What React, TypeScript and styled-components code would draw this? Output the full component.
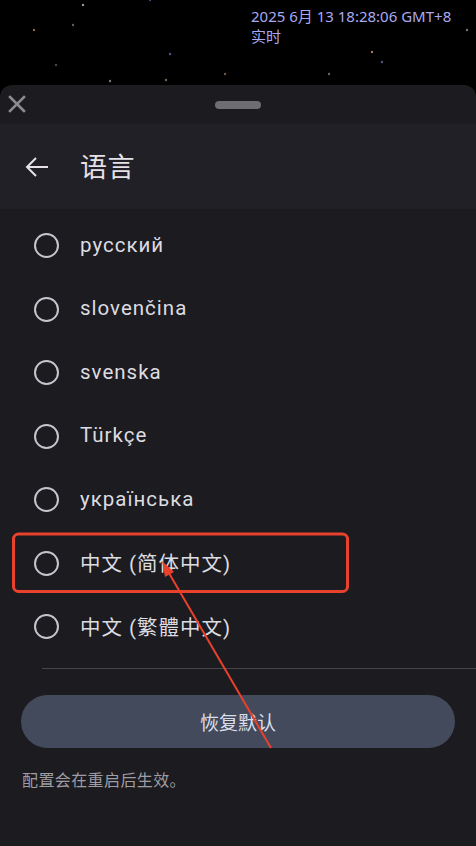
import React from "react";
import styled, {createGlobalStyle} from "styled-components";

const GlobalStyle = createGlobalStyle`
  html, body {
    margin: 0;
    padding: 0;
    background: #000;
  }

  body {
    font-family: Roboto, "Noto Sans CJK SC", sans-serif;
  }
`;

const Page = styled.div`
  width: 476px;
  height: 846px;
  position: relative;
  overflow: hidden;
  display: flex;
  flex-direction: column;
  background: #000;
`;

const Sky = styled.div`
  position: relative;
  height: 85px;
  flex: none;
  padding: 6px 0 0 251px;
  box-sizing: border-box;
  color: #a9a9f2;
  font-family: "Noto Sans", "Noto Sans CJK SC", sans-serif;
  font-size: 15px;
  line-height: 20px;
`;

const Stars = styled.svg`
  position: absolute;
  inset: 0;
  pointer-events: none;
`;

const SkyText = styled.div`
  position: relative;
`;

const Sheet = styled.div`
  flex: 1;
  background: #1c1b20;
  border-radius: 12px 12px 0 0;
  display: flex;
  flex-direction: column;
`;

const Grabber = styled.div`
  height: 39px;
  position: relative;
  display: flex;
  align-items: center;
  justify-content: center;
`;

const CloseButton = styled.div`
  position: absolute;
  left: 8px;
  top: 10px;
  width: 18px;
  height: 18px;
  display: flex;
`;

const Handle = styled.div`
  width: 46px;
  height: 8px;
  border-radius: 4px;
  background: #6e6e70;
`;

const TitleBar = styled.div`
  height: 85px;
  background: #212026;
  display: flex;
  align-items: center;
  padding-left: 25px;
  gap: 31px;
  color: #e6e1e6;
`;

const Title = styled.div`
  font-family: "Noto Sans CJK SC", sans-serif;
  font-size: 27px;
  line-height: 1;
  margin-top: -2px;
  letter-spacing: 0.5px;
`;

const List = styled.div`
  display: flex;
  flex-direction: column;
  padding-top: 5px;
`;

const Row = styled.div`
  height: 63.5px;
  display: flex;
  align-items: center;
  padding-left: 34px;
  gap: 21px;
`;

const Radio = styled.span`
  width: 21px;
  height: 21px;
  border: 2.5px solid #c6c5cb;
  border-radius: 50%;
  flex: none;
`;

const Label = styled.span`
  font-size: 20.5px;
  color: #dddce1;
  letter-spacing: 1px;
  margin-top: -2px;
`;

const Divider = styled.div`
  height: 1px;
  background: #47464c;
  margin: 9px 0 0 42px;
`;

const ResetButton = styled.div`
  margin: 26px 21px 0;
  height: 53px;
  border-radius: 27px;
  background: #434a5c;
  display: flex;
  align-items: center;
  justify-content: center;
  font-family: "Noto Sans CJK SC", sans-serif;
  font-size: 19px;
  color: #dadeea;
`;

const Note = styled.div`
  margin: 19px 0 0 22px;
  font-family: "Noto Sans CJK SC", sans-serif;
  font-size: 16px;
  letter-spacing: 0.4px;
  color: #9e9da3;
`;

const Annotation = styled.svg`
  position: absolute;
  inset: 0;
  pointer-events: none;
`;

const languages = [
    "русский",
    "slovenčina",
    "svenska",
    "Türkçe",
    "українська",
    "中文 (简体中文)",
    "中文 (繁體中文)",
];

const stars = [
    [83, 5, "#999"], [34, 30, "#8a6a50"], [73, 25, "#6a5a50"], [170, 54, "#4a5a8a"],
    [56, 65, "#3a4a5a"], [110, 81, "#777"], [225, 74, "#6a5545"], [166, 80, "#806040"],
    [329, 74, "#666"], [372, 52, "#a07a60"], [382, 62, "#4a5a8a"], [467, 30, "#807060"],
    [150, 0, "#3a4a7a"],
] as const;

const App = () => {
    return (
        <Page>
            <GlobalStyle/>
            <Sky>
                <Stars width="476" height="85">
                    {stars.map(([x, y, c], i) => (
                        <circle key={i} cx={x} cy={y} r={1.2} fill={c}/>
                    ))}
                </Stars>
                <SkyText>2025 6月 13 18:28:06 GMT+8</SkyText>
                <SkyText>实时</SkyText>
            </Sky>
            <Sheet>
                <Grabber>
                    <CloseButton>
                        <svg width="18" height="18" viewBox="0 0 18 18">
                            <path d="M2 2L16 16M16 2L2 16" stroke="#8c8c8e" strokeWidth="2.6" strokeLinecap="square"/>
                        </svg>
                    </CloseButton>
                    <Handle/>
                </Grabber>
                <TitleBar>
                    <svg width="24" height="24" viewBox="0 0 24 24">
                        <path d="M23 12H2M11 3L2 12L11 21" stroke="#e6e1e6" strokeWidth="2" fill="none"/>
                    </svg>
                    <Title>语言</Title>
                </TitleBar>
                <List>
                    {languages.map((lang) => (
                        <Row key={lang}>
                            <Radio/>
                            <Label>{lang}</Label>
                        </Row>
                    ))}
                </List>
                <Divider/>
                <ResetButton>恢复默认</ResetButton>
                <Note>配置会在重启后生效。</Note>
            </Sheet>
            <Annotation width="476" height="846">
                <rect x="13.5" y="534" width="334" height="57.5" rx="5" fill="none" stroke="#e8412c" strokeWidth="3"/>
                <line x1="271" y1="748" x2="166" y2="568" stroke="#e8412c" strokeWidth="2"/>
                <polygon points="162,561 174,572 165,577" fill="#e8412c"/>
            </Annotation>
        </Page>
    );
}

export default App;
